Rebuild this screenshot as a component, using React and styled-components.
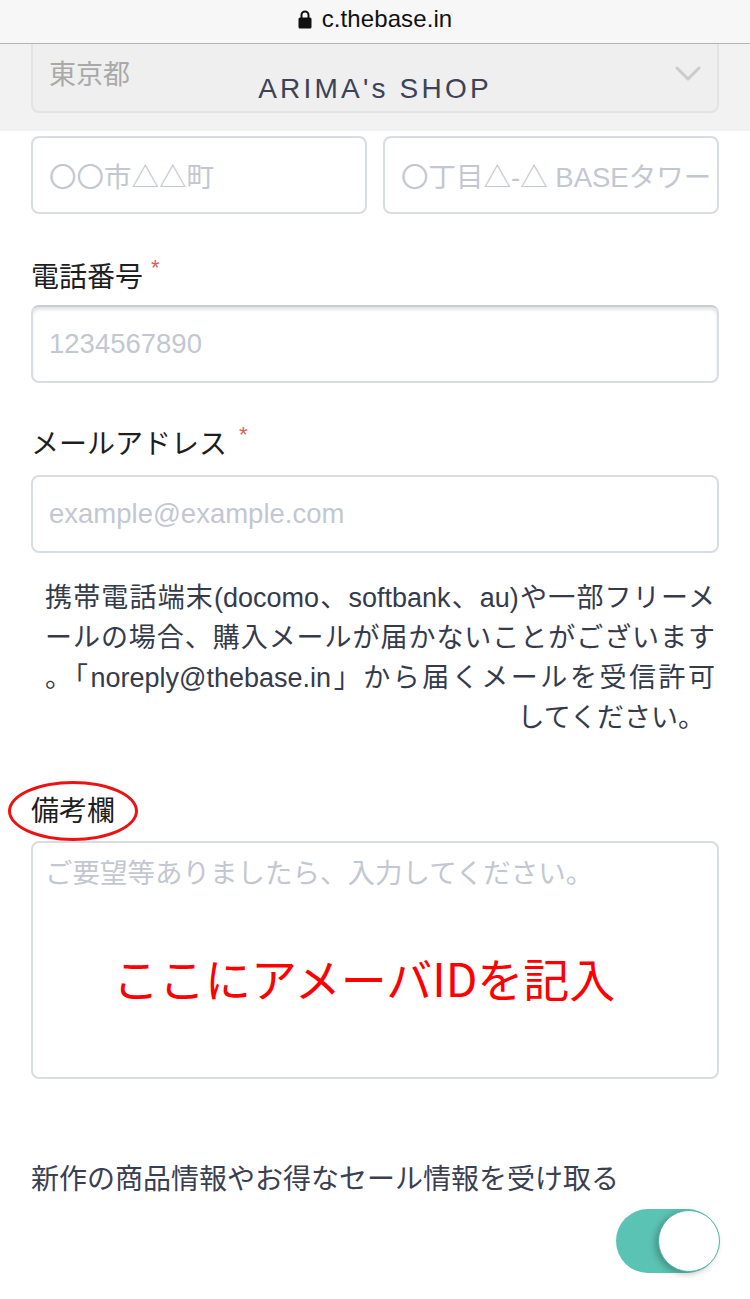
import React from "react";
import styled, { createGlobalStyle } from "styled-components";

const Global = createGlobalStyle`
  html, body { margin: 0; padding: 0; background: #ffffff; }
  body {
    font-family: "Liberation Sans", "Noto Sans CJK JP", sans-serif;
    -webkit-font-smoothing: antialiased;
  }
  * { box-sizing: border-box; }
`;

const Page = styled.div`
  width: 750px;
  min-height: 1299px;
  background: #ffffff;
  padding-bottom: 25px;
`;

const BrowserBar = styled.div`
  height: 44px;
  background: #f7f7f7;
  border-bottom: 1px solid #b4b4b4;
  display: flex;
  align-items: center;
  justify-content: center;
  gap: 10px;
  padding-bottom: 5px;
`;

const Url = styled.span`
  font-size: 24px;
  color: #111111;
  letter-spacing: 0.1px;
`;

const ShopHeader = styled.div`
  position: relative;
  height: 87px;
  background: #f2f2f2;
  padding: 0 31px;
  overflow: hidden;
`;

const SelectBox = styled.div`
  margin-top: -10px;
  height: 79px;
  border: 2px solid #e3e3e3;
  border-radius: 8px;
  background: #efefef;
  display: flex;
  align-items: center;
  justify-content: space-between;
  padding: 0 16px 0 16px;
`;

const SelectValue = styled.span`
  font-size: 27px;
  color: #a9a9a9;
  margin-top: -2px;
`;

const ShopTitle = styled.div`
  position: absolute;
  left: 0;
  right: 0;
  top: 28px;
  text-align: center;
  font-size: 28px;
  line-height: 34px;
  letter-spacing: 3.2px;
  color: #3c4356;
`;

const Form = styled.div`
  padding: 5px 31px 0;
`;

const AddressRow = styled.div`
  display: grid;
  grid-template-columns: 1fr 1fr;
  gap: 16px;
`;

const Field = styled.div`
  height: 78px;
  border: 2px solid #d8dce3;
  border-radius: 8px;
  padding: 0 16px;
  display: flex;
  align-items: center;
  overflow: hidden;
  white-space: nowrap;
  background: #ffffff;
  box-shadow: ${(p) => (p.$inset ? "inset 0 3px 3px rgba(0,0,0,0.10)" : "none")};
  border-top-color: ${(p) => (p.$inset ? "#c9ccd2" : "#d8dce3")};
`;

const Placeholder = styled.span`
  font-size: 27.5px;
  color: #c3c7d1;
`;

const Label = styled.div`
  position: relative;
  height: 36px;
  margin-top: ${(p) => p.$top || 46}px;
  margin-bottom: ${(p) => p.$bottom || 9}px;
  font-size: 28px;
  line-height: 36px;
  color: #1e1e1e;
  white-space: nowrap;
`;

const Required = styled.span`
  color: #e05c5c;
  font-size: 22px;
  line-height: 1;
  margin-left: ${(p) => p.$gap || 8}px;
  position: relative;
  top: -12px;
`;

const Circle = styled.span`
  position: absolute;
  left: -23px;
  top: -13px;
  width: 130px;
  height: 60px;
  border: 3px solid #ee1111;
  border-radius: 50%;
  pointer-events: none;
`;

const Help = styled.div`
  margin-top: 25px;
  padding: 0 4px 0 14px;
  font-size: 27px;
  line-height: 40px;
  color: #353b4b;
`;

const HelpLine = styled.span`
  display: block;
  white-space: nowrap;
  text-align: ${(p) => (p.$last ? "right" : "justify")};
  text-align-last: ${(p) => (p.$last ? "right" : "justify")};
  padding-right: ${(p) => (p.$last ? 10 : 0)}px;
`;

const NoteArea = styled.div`
  position: relative;
  height: 238px;
  border: 2px solid #d8dce3;
  border-radius: 8px;
  padding: 13px 12px;
  line-height: 36px;
`;

const Annotation = styled.div`
  position: absolute;
  left: 80px;
  top: 104px;
  font-family: "Noto Sans CJK JP", sans-serif;
  font-size: 46px;
  line-height: 60px;
  color: #ff0000;
  white-space: nowrap;
`;

const OptIn = styled.div`
  margin-top: 83px;
  font-size: 28px;
  line-height: 36px;
  color: #3a4051;
`;

const ToggleRow = styled.div`
  margin-top: 11px;
  display: flex;
  justify-content: flex-end;
`;

const Track = styled.div`
  position: relative;
  width: 103px;
  height: 64px;
  border-radius: 32px;
  background: #5bc3b3;
`;

const Knob = styled.span`
  position: absolute;
  right: -1px;
  top: 1px;
  width: 62px;
  height: 62px;
  border-radius: 50%;
  background: #ffffff;
  border: 1.5px solid #4fb4a4;
  box-shadow: -3px 2px 6px rgba(0, 0, 0, 0.25);
`;

const Lock = () => (
  <svg width="14" height="20" viewBox="0 0 14 20" aria-hidden="true">
    <path d="M3.5 9 V6 a3.5 3.5 0 0 1 7 0 V9" fill="none" stroke="#111" strokeWidth="2" />
    <rect x="0.5" y="8.5" width="13" height="11" rx="1.5" fill="#111" />
  </svg>
);

const Chevron = () => (
  <svg width="26" height="16" viewBox="0 0 26 16" aria-hidden="true">
    <polyline points="2,2 13,13 24,2" fill="none" stroke="#cbcbcb" strokeWidth="3" strokeLinecap="round" strokeLinejoin="round" />
  </svg>
);

export default function App() {
  return (
    <>
      <Global />
      <Page>
        <BrowserBar>
          <Lock />
          <Url>c.thebase.in</Url>
        </BrowserBar>
        <ShopHeader>
          <SelectBox>
            <SelectValue>東京都</SelectValue>
            <Chevron />
          </SelectBox>
          <ShopTitle>ARIMA's SHOP</ShopTitle>
        </ShopHeader>
        <Form>
          <AddressRow>
            <Field>
              <Placeholder>〇〇市△△町</Placeholder>
            </Field>
            <Field>
              <Placeholder>〇丁目△-△ BASEタワー</Placeholder>
            </Field>
          </AddressRow>

          <Label>
            電話番号<Required>*</Required>
          </Label>
          <Field $inset>
            <Placeholder>1234567890</Placeholder>
          </Field>

          <Label $top={44} $bottom={12}>
            メールアドレス<Required $gap={12}>*</Required>
          </Label>
          <Field>
            <Placeholder>example@example.com</Placeholder>
          </Field>

          <Help>
            <HelpLine>携帯電話端末(docomo、softbank、au)や一部フリーメ</HelpLine>
            <HelpLine>ールの場合、購入メールが届かないことがございます</HelpLine>
            <HelpLine>。「noreply@thebase.in」から届くメールを受信許可</HelpLine>
            <HelpLine $last>してください。</HelpLine>
          </Help>

          <Label $top={56} $bottom={11}>
            備考欄
            <Circle />
          </Label>
          <NoteArea>
            <Placeholder>ご要望等ありましたら、入力してください。</Placeholder>
            <Annotation>ここにアメーバIDを記入</Annotation>
          </NoteArea>

          <OptIn>新作の商品情報やお得なセール情報を受け取る</OptIn>
          <ToggleRow>
            <Track>
              <Knob />
            </Track>
          </ToggleRow>
        </Form>
      </Page>
    </>
  );
}
